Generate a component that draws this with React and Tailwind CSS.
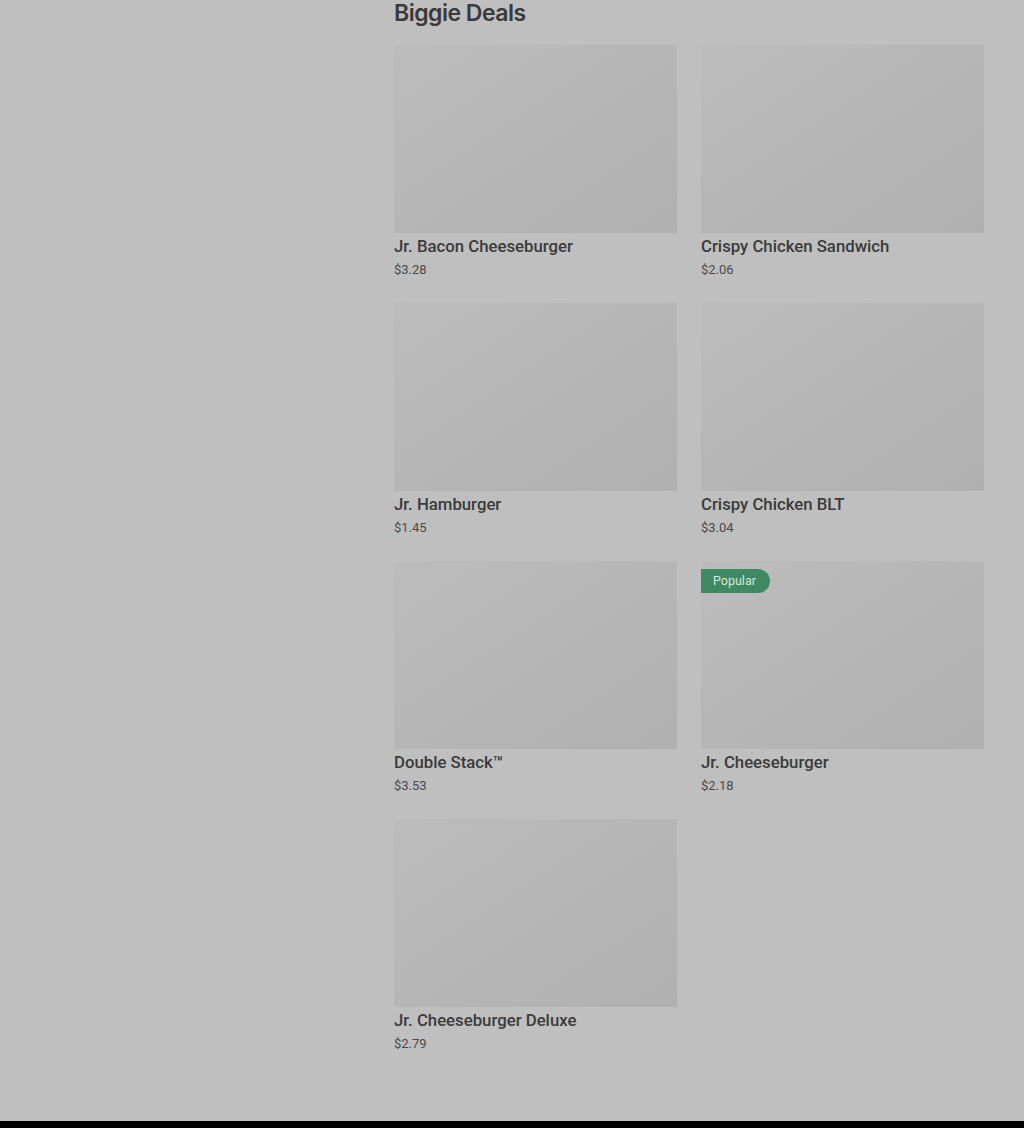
const items = [
  { name: 'Jr. Bacon Cheeseburger', price: '$3.28' },
  { name: 'Crispy Chicken Sandwich', price: '$2.06' },
  { name: 'Jr. Hamburger', price: '$1.45' },
  { name: 'Crispy Chicken BLT', price: '$3.04' },
  { name: 'Double Stack™', price: '$3.53' },
  { name: 'Jr. Cheeseburger', price: '$2.18', popular: true },
  { name: 'Jr. Cheeseburger Deluxe', price: '$2.79' },
];

function Card({ item }) {
  return (
    <div className="flex flex-col">
      <div className="relative h-[188px] bg-gradient-to-br from-[#bcbcbc] to-[#b0b0b0]">
        {item.popular && (
          <span className="absolute left-0 top-2 flex h-6 items-center rounded-r-full bg-[#3f8a62] pl-3 pr-[14px] text-[12.5px] text-[#d6e6dc]">
            Popular
          </span>
        )}
      </div>
      <div className="mt-[2px] text-[16.75px] leading-[22px] font-medium text-[#3b3b3b]">{item.name}</div>
      <div className="mt-[3px] text-[13px] leading-[19px] text-[#4a4a4a]">{item.price}</div>
    </div>
  );
}

export default function App() {
  return (
    <div className="min-h-[1128px] bg-[#bfbfbf] font-['Roboto',sans-serif] flex flex-col">
      <div className="flex flex-1">
        <div className="w-[394px] shrink-0" />
        <div className="w-[590px]">
          <h2 className="text-[23px] leading-[26px] font-semibold tracking-[-0.5px] text-[#3a3a3a] font-['Inter',sans-serif]">
            Biggie Deals
          </h2>
          <div className="mt-[19px] grid grid-cols-2 gap-x-6 gap-y-6">
            {items.map((item) => (
              <Card key={item.name} item={item} />
            ))}
          </div>
        </div>
      </div>
      <div className="mt-[68px] h-[7px] bg-black" />
    </div>
  );
}
